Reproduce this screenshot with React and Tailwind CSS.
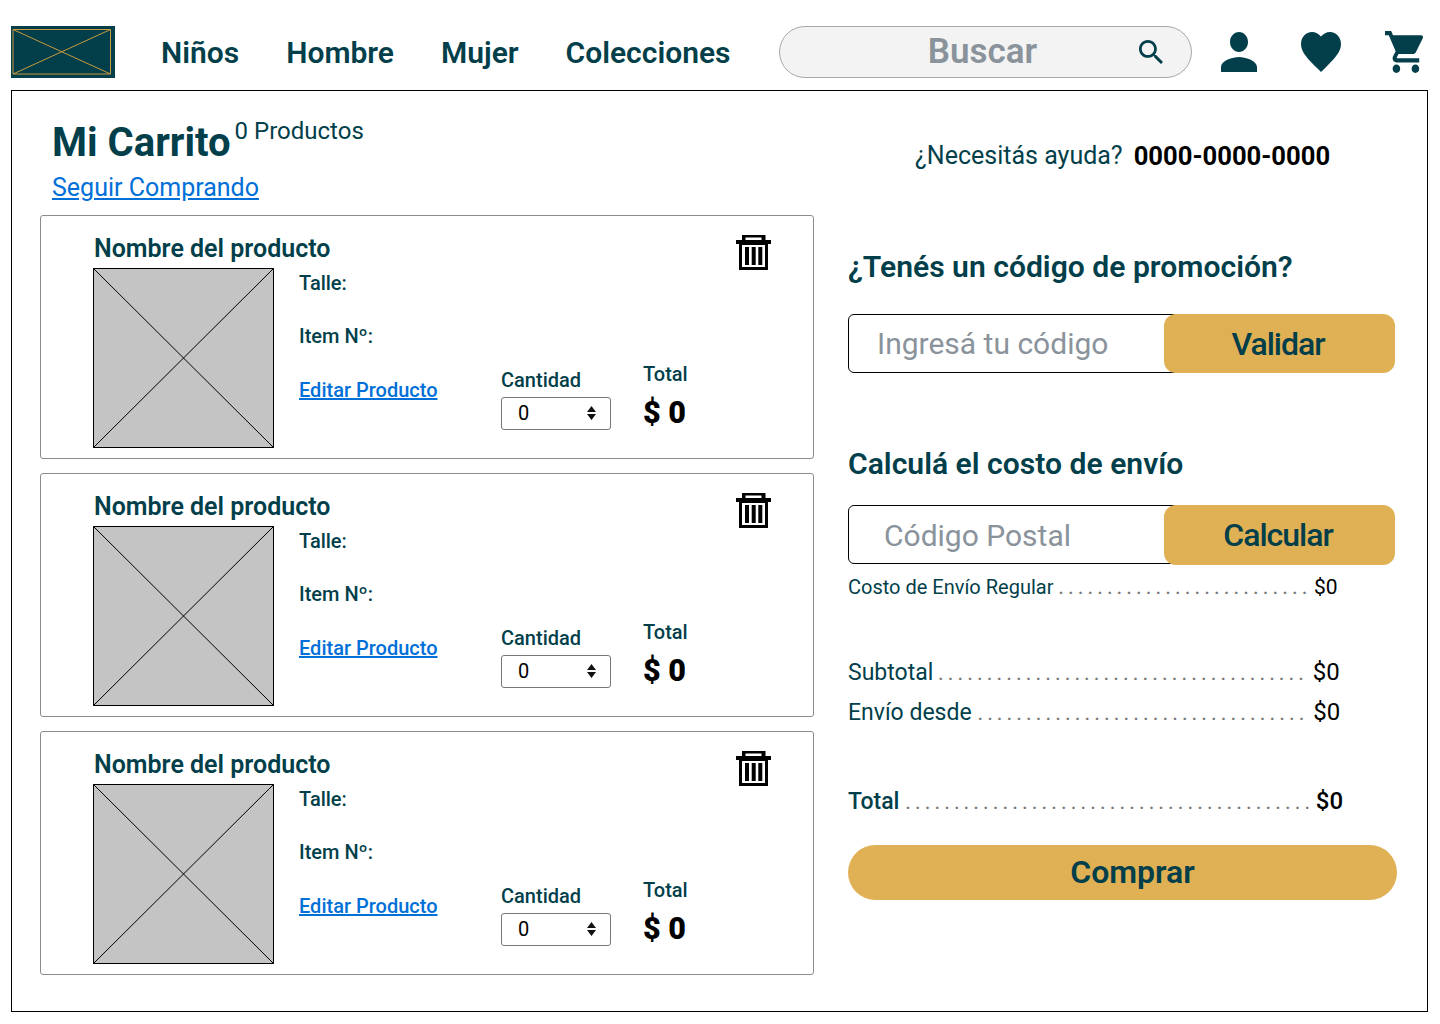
const dark = 'text-[#023f4a]'

function Logo() {
  return (
    <svg width="104" height="52" viewBox="0 0 104 52" className="shrink-0">
      <rect width="104" height="52" fill="#023f4a" />
      <path d="M2 3.5H99.5V48H2Z M2 48L99.5 3.5 M2 3.5L99.5 48" fill="none" stroke="#c99a3e" strokeWidth="1" />
    </svg>
  )
}

function Trash() {
  return (
    <svg width="35" height="36" viewBox="0 0 35 36" className="absolute right-[42px] top-[19px]">
      <path d="M6 0H29.5V5H35V9H32V35H3V9H0V5H6Z" fill="#000" />
      <rect x="9.5" y="2.5" width="16" height="2.5" fill="#fff" />
      <rect x="6" y="10" width="23" height="22" fill="#fff" />
      <rect x="9" y="12" width="4" height="18" fill="#000" />
      <rect x="15.7" y="12" width="4" height="18" fill="#000" />
      <rect x="22.3" y="12" width="4" height="18" fill="#000" />
    </svg>
  )
}

function Placeholder() {
  return (
    <svg width="181" height="180" viewBox="0 0 181 180" className="shrink-0 bg-[#c4c4c4]">
      <path d="M.5.5H180.5V179.5H.5Z M.5.5L180.5 179.5 M180.5.5L.5 179.5" fill="none" stroke="#000" strokeWidth="1" />
    </svg>
  )
}

function ProductCard() {
  return (
    <div className={`relative h-[244px] rounded-[3px] border border-[#8c8c8c] pl-[52px] pt-[17px] ${dark}`}>
      <h3 className="h-[30px] pl-[1px] pt-[1px] text-[25px] font-semibold leading-[30px]">Nombre del producto</h3>
      <Trash />
      <div className="mt-[5px] flex">
        <Placeholder />
        <div className="ml-[25px] flex w-[202px] flex-col gap-[27px] pt-[2px] text-[20px] font-medium leading-[26px]">
          <span>Talle:</span>
          <span>Item Nº:</span>
          <a className="mt-[1px] text-[#0070d8] underline">Editar Producto</a>
        </div>
        <div className="w-[142px] pt-[100px]">
          <div className="text-[20px] font-medium leading-[24px]">Cantidad</div>
          <div className="mt-[5px] flex h-[33px] w-[110px] items-center justify-between rounded-[3px] border border-[#777] pb-[1px] pl-[16px] pr-[14px] text-[20px] text-black">
            <span>0</span>
            <svg width="9" height="14" viewBox="0 0 9 14">
              <path d="M4.5 0L9 6H0Z M0 8H9L4.5 14Z" fill="#111" />
            </svg>
          </div>
        </div>
        <div className="pt-[94px]">
          <div className="text-[20px] font-medium leading-[24px]">Total</div>
          <div className="mt-[9px] text-[30.5px] font-black leading-[36px] text-black">$ 0</div>
        </div>
      </div>
    </div>
  )
}

function Dots({ count, className }) {
  return (
    <span className={`whitespace-nowrap text-[18.5px] font-medium text-[#777] ${className}`}>
      {Array(count).fill('.').join(' ')}
    </span>
  )
}

function CodeField({ placeholder, button, inset, height }) {
  return (
    <div className={`flex ${height}`}>
      <input
        placeholder={placeholder}
        className={`h-[59px] w-[327px] rounded-l-[6px] border border-black text-[30px] outline-none placeholder:text-[#8a939b] ${inset}`}
      />
      <button className={`-ml-[11px] z-10 h-full w-[231px] rounded-[12px] bg-[#e0b054] pr-[3px] text-[32px] font-medium tracking-[-1px] ${dark}`}>
        {button}
      </button>
    </div>
  )
}

export default function App() {
  return (
    <div className="h-[1024px] w-[1440px] bg-white font-['Roboto',sans-serif]">
      <header className={`flex h-[90px] items-start pl-[11px] pt-[26px] ${dark}`}>
        <Logo />
        <nav className="ml-[46px] flex h-[52px] items-center gap-[47px] pt-[1px] text-[30px] font-semibold">
          <a>Niños</a>
          <a>Hombre</a>
          <a>Mujer</a>
          <a>Colecciones</a>
        </nav>
        <div className="ml-[48px] flex h-[52px] w-[413px] items-center rounded-full border border-[#a8a8a8] bg-[#f3f3f3] pr-[28px]">
          <input
            placeholder="Buscar"
            className="w-[358px] bg-transparent pl-[48px] text-center text-[35px] font-semibold outline-none placeholder:text-[#8a939b]"
          />
          <svg width="24" height="24" viewBox="3 3 17.49 17.49" className="ml-auto" fill="#023f4a">
            <path d="M15.5 14h-.79l-.28-.27C15.41 12.59 16 11.11 16 9.5 16 5.91 13.09 3 9.5 3S3 5.91 3 9.5 5.91 16 9.5 16c1.61 0 3.09-.59 4.23-1.57l.27.28v.79l5 4.99L20.49 19l-4.99-5zm-6 0C7.01 14 5 11.99 5 9.5S7.01 5 9.5 5 14 7.01 14 9.5 11.99 14 9.5 14z" />
          </svg>
        </div>
        <svg width="36" height="40" viewBox="4 4 16 16" preserveAspectRatio="none" fill="#023f4a" className="ml-[29px] mt-[6px]">
          <path d="M12 12c2.21 0 4-1.79 4-4s-1.79-4-4-4-4 1.79-4 4 1.79 4 4 4zm0 2c-2.67 0-8 1.34-8 4v2h16v-2c0-2.66-5.33-4-8-4z" />
        </svg>
        <svg width="40" height="40" viewBox="2 3 20 18.35" preserveAspectRatio="none" fill="#023f4a" className="ml-[44px] mt-[6px]">
          <path d="M12 21.35l-1.45-1.32C5.4 15.36 2 12.28 2 8.5 2 5.42 4.42 3 7.5 3c1.74 0 3.41.81 4.5 2.09C13.09 3.81 14.76 3 16.5 3 19.58 3 22 5.42 22 8.5c0 3.78-3.4 6.86-8.55 11.54L12 21.35z" />
        </svg>
        <svg width="38" height="42" viewBox="1 2 20 20" preserveAspectRatio="none" fill="#023f4a" className="ml-[44px] mt-[5px]">
          <path d="M7 18c-1.1 0-1.99.9-1.99 2S5.9 22 7 22s2-.9 2-2-.9-2-2-2zM1 2v2h2l3.6 7.59-1.35 2.45c-.16.28-.25.61-.25.96 0 1.1.9 2 2 2h12v-2H7.42c-.14 0-.25-.11-.25-.25l.03-.12.9-1.63h7.45c.75 0 1.41-.41 1.75-1.03l3.58-6.49c.08-.14.12-.31.12-.48 0-.55-.45-1-1-1H5.21l-.94-2H1zm16 16c-1.1 0-1.99.9-1.99 2s.89 2 1.99 2 2-.9 2-2-.9-2-2-2z" />
        </svg>
      </header>

      <main className={`ml-[11px] flex h-[922px] w-[1417px] border border-black pl-[28px] ${dark}`}>
        {/* Cart items */}
        <section className="w-[774px] shrink-0">
          <div className="pl-[12px] pt-[28px]">
            <div className="flex h-[54px] items-start">
              <h1 className="text-[40px] font-bold leading-[48px]">Mi Carrito</h1>
              <span className="-mt-[2px] ml-[4px] text-[24px] leading-[28px]">0 Productos</span>
            </div>
            <a className="block h-[30px] text-[25px] leading-[30px] text-[#0070d8] underline">Seguir Comprando</a>
          </div>
          <div className="mt-[12px] flex flex-col gap-[14px]">
            <ProductCard />
            <ProductCard />
            <ProductCard />
          </div>
        </section>

        {/* Order summary */}
        <section className="ml-[34px] w-[549px] shrink-0">
          <div className="mt-[49px] flex h-[32px] items-center pl-[67px] text-[25px]">
            <span>¿Necesitás ayuda?</span>
            <span className="ml-[11px] text-[25.6px] font-bold text-black">0000-0000-0000</span>
          </div>
          <h2 className="mt-[75px] h-[40px] text-[30.1px] font-semibold leading-[40px]">¿Tenés un código de promoción?</h2>
          <div className="mt-[27px]">
            <CodeField placeholder="Ingresá tu código" button="Validar" inset="pl-[28px]" height="h-[59px]" />
          </div>
          <h2 className="mt-[71px] h-[40px] text-[30.1px] font-semibold leading-[40px]">Calculá el costo de envío</h2>
          <div className="mt-[21px]">
            <CodeField placeholder="Código Postal" button="Calcular" inset="pl-[35px] pt-[1px]" height="h-[60px]" />
          </div>

          <div className="mt-[10px] flex h-[24px] items-baseline text-[20px] leading-[24px]">
            <span>Costo de Envío Regular</span>
            <Dots count={26} className="ml-[5px]" />
            <span className="ml-[7px] text-[21px] text-black">$0</span>
          </div>
          <div className="mt-[58px] flex h-[30px] items-baseline text-[23px] leading-[30px]">
            <span>Subtotal</span>
            <Dots count={38} className="ml-[5px]" />
            <span className="ml-[9px] text-[24px] text-black">$0</span>
          </div>
          <div className="mt-[10px] flex h-[30px] items-baseline text-[23px] leading-[30px]">
            <span>Envío desde</span>
            <Dots count={34} className="ml-[6px]" />
            <span className="ml-[9px] text-[24px] text-black">$0</span>
          </div>
          <div className="mt-[59px] flex h-[30px] items-baseline text-[23px] font-medium leading-[30px]">
            <span>Total</span>
            <Dots count={42} className="ml-[6px]" />
            <span className="ml-[6px] text-[24px] text-black">$0</span>
          </div>
          <button className={`mt-[29px] h-[55px] w-[549px] rounded-full bg-[#e0b054] pb-[2px] pl-[20px] text-[32px] font-semibold ${dark}`}>
            Comprar
          </button>
        </section>
      </main>
    </div>
  )
}
